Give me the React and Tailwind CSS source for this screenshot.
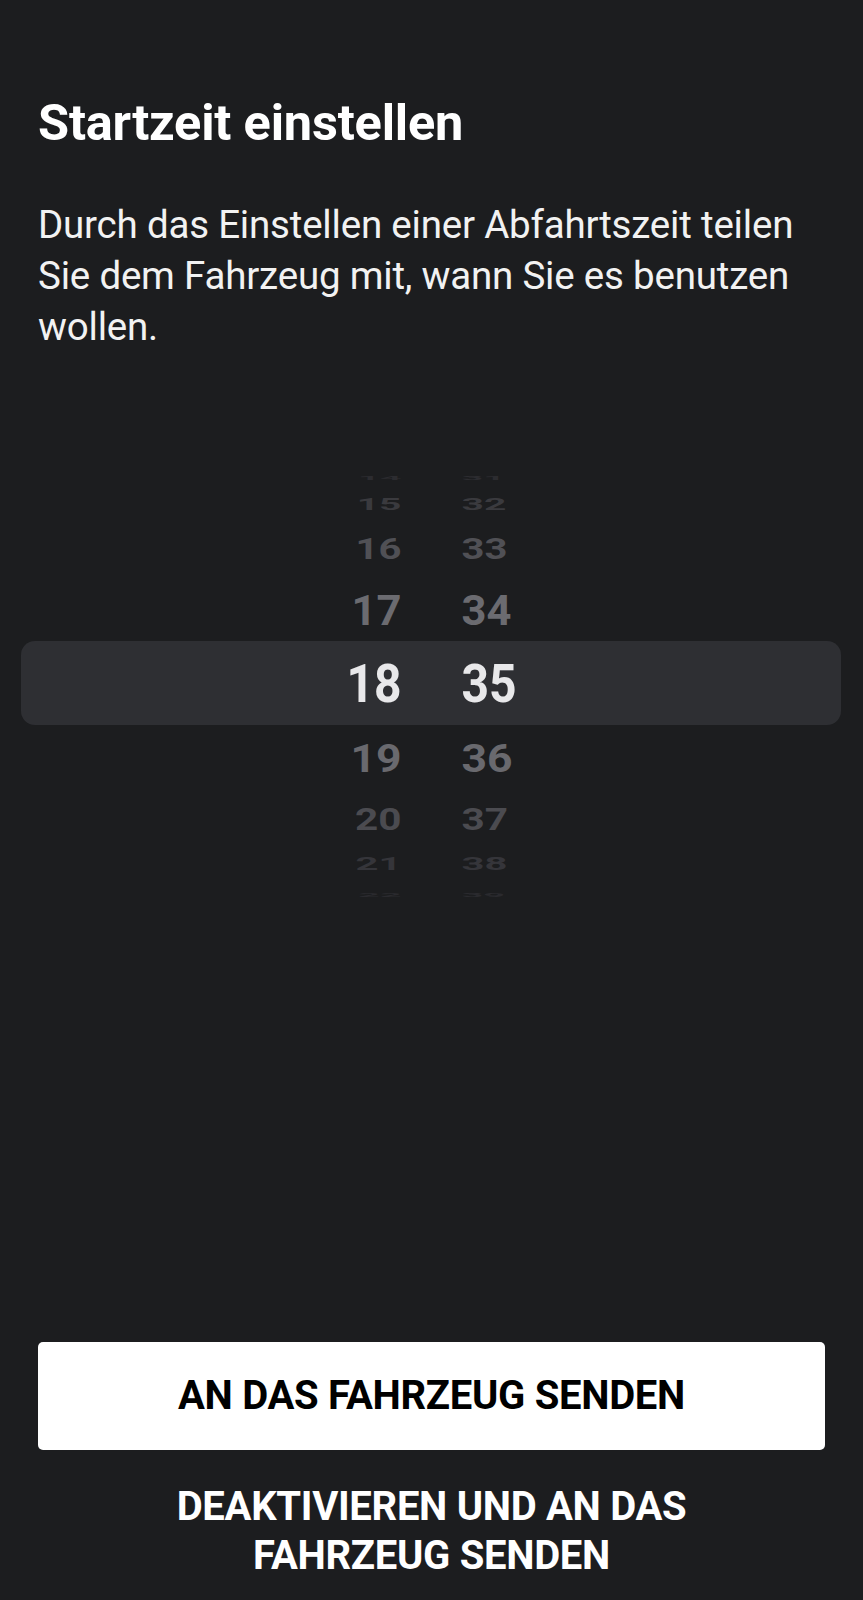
import React from "react";

// wheel rows: row height, font size, vertical squash, colour
const rows = [
  { h: "14", m: "31", rh: 14, size: 38, sy: 0.15, color: "text-[#2c2c30]" },
  { h: "15", m: "32", rh: 38, size: 39, sy: 0.43, color: "text-[#3a3a3e]" },
  { h: "16", m: "33", rh: 52, size: 40, sy: 0.74, color: "text-[#505055]" },
  { h: "17", m: "34", rh: 72, size: 43.5, sy: 0.97, color: "text-[#6b6b70]" },
  { h: "18", m: "35", rh: 73, size: 48, sy: 1.1, color: "text-[#e8e8ea]" },
  { h: "19", m: "36", rh: 78, size: 44.5, sy: 0.88, color: "text-[#69696e]" },
  { h: "20", m: "37", rh: 42, size: 40.5, sy: 0.76, color: "text-[#4b4b50]" },
  { h: "21", m: "38", rh: 48, size: 40, sy: 0.46, color: "text-[#35353a]" },
  { h: "22", m: "39", rh: 14, size: 38, sy: 0.15, color: "text-[#2a2a2e]" },
];

function TimePicker() {
  return (
    <div className="relative">
      {/* selection band behind the middle row */}
      <div className="absolute left-[21px] right-[22px] top-[170px] h-[84px] rounded-[14px] bg-[#2e2f33]" />
      <div className="relative flex flex-col">
        {rows.map((r) => (
          <div
            key={r.h}
            className={`flex justify-center items-center gap-[60px] font-bold ${r.color}`}
            style={{ height: r.rh, fontSize: r.size }}
          >
            <span className="w-[120px] text-right leading-none" style={{ transform: `scaleY(${r.sy})` }}>
              {r.h}
            </span>
            <span className="w-[120px] text-left leading-none" style={{ transform: `scaleY(${r.sy})` }}>
              {r.m}
            </span>
          </div>
        ))}
      </div>
    </div>
  );
}

export default function App() {
  return (
    <div
      className="w-full min-h-screen bg-[#1c1d1f] text-white flex flex-col overflow-hidden"
      style={{ fontFamily: "Roboto, 'Noto Sans', sans-serif" }}
    >
      <div className="px-[38px] pt-[93px]">
        <h1 className="text-[50.5px] font-bold leading-[60px] tracking-[-0.2px]">Startzeit einstellen</h1>
        <p className="mt-[46px] text-[38.5px] leading-[51px] text-[#f2f2f2] tracking-[-0.2px]">
          Durch das Einstellen einer Abfahrtszeit teilen Sie dem Fahrzeug mit, wann Sie es benutzen wollen.
        </p>
      </div>
      <div className="mt-[119px]">
        <TimePicker />
      </div>
      <div className="flex-1" />
      <div className="px-[38px] pb-[20px] flex flex-col items-center">
        <button className="w-full h-[108px] bg-white rounded-[5px] text-black text-[40px] font-bold tracking-[-0.3px]">
          AN DAS FAHRZEUG SENDEN
        </button>
        <button className="mt-[32px] w-[560px] text-white text-[40px] font-bold leading-[49px] tracking-[-0.3px]">
          DEAKTIVIEREN UND AN DAS FAHRZEUG SENDEN
        </button>
      </div>
    </div>
  );
}
